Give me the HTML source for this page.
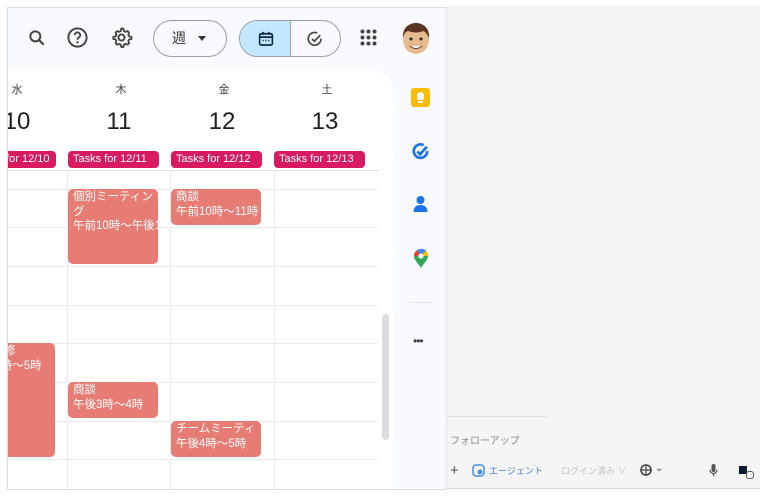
<!DOCTYPE html>
<html><head><meta charset="utf-8"><style>
*{box-sizing:border-box;margin:0;padding:0}
body{width:770px;height:497px;background:#fff;position:relative;overflow:hidden;font-family:"Liberation Sans","Noto Sans CJK JP",sans-serif}
.abs{position:absolute}
#left{left:7px;top:7px;width:440px;height:483px;background:#f8fafd;border:1px solid #dadce0;border-right:1px solid #e3e3e3;overflow:hidden}
#grid{left:0;top:62px;width:385px;height:430px;background:#fff;border-top-right-radius:22px;overflow:hidden}
.vl{position:absolute;top:100px;width:1px;height:330px;background:#e8ebf0}
.hl{position:absolute;left:0;width:370px;height:1px;background:#e8ebf0}
.ev{position:absolute;background:#e67c73;color:#fff;border-radius:5px;font-size:11.5px;line-height:14.5px;padding:1px 5px;overflow:hidden;white-space:nowrap}
.chip{position:absolute;top:81px;height:17px;background:#d81b60;color:#fff;border-radius:4px;font-size:11px;line-height:17px;padding-left:5px;overflow:hidden;white-space:nowrap}
.dow{position:absolute;top:11px;font-size:11px;color:#3c4043;width:30px;text-align:center}
.num{position:absolute;top:38px;font-size:24px;color:#1f1f1f;width:50px;text-align:center}
#right{left:447px;top:6px;width:313px;height:483px;background:#f5f5f5}
</style></head><body>
<div id="left" class="abs">
 <svg class="abs" style="left:19px;top:20px" width="20" height="20" viewBox="0 0 24 24"><circle cx="10" cy="10" r="6" fill="none" stroke="#444" stroke-width="2.4"/><path d="M14.5 14.5L20 20" stroke="#444" stroke-width="2.6"/></svg>
 <svg class="abs" style="left:58px;top:18px" width="23" height="23" viewBox="0 0 24 24"><circle cx="12" cy="12" r="9.5" fill="none" stroke="#444" stroke-width="2"/><path d="M9.2 9.5a2.8 2.8 0 1 1 4 2.5c-1 .5-1.2 1.2-1.2 2.2" fill="none" stroke="#444" stroke-width="2"/><circle cx="12" cy="17" r="1.2" fill="#444"/></svg>
 <svg class="abs" style="left:102px;top:18px" width="23" height="23" viewBox="0 0 24 24"><path d="M12 2.5l2 .3.5 2.4 1.6.9 2.3-.8 1.5 1.6-.8 2.3.9 1.6 2.4.5v2.2l-2.4.5-.9 1.6.8 2.3-1.5 1.6-2.3-.8-1.6.9-.5 2.4h-2.2l-.5-2.4-1.6-.9-2.3.8-1.5-1.6.8-2.3-.9-1.6-2.4-.5v-2.2l2.4-.5.9-1.6-.8-2.3 1.5-1.6 2.3.8 1.6-.9.5-2.4z" fill="none" stroke="#444" stroke-width="1.9" stroke-linejoin="round"/><circle cx="12" cy="12" r="3.2" fill="none" stroke="#444" stroke-width="2"/></svg>
 <div class="abs" style="left:145px;top:12px;width:74px;height:37px;border:1px solid #9aa0a6;border-radius:19px;font-size:14px;color:#333;line-height:35px;padding-left:18px">週<span style="position:absolute;left:44px;top:15px;border:4px solid transparent;border-top:5px solid #333"></span></div>
 <div class="abs" style="left:231px;top:12px;width:102px;height:37px;border:1px solid #9aa0a6;border-radius:19px;overflow:hidden">
  <div class="abs" style="left:0;top:0;width:51px;height:37px;background:#c2e7ff;border-right:1px solid #9aa0a6"></div>
  <svg class="abs" style="left:17px;top:9px" width="18" height="18" viewBox="0 0 24 24"><rect x="3.5" y="5" width="17" height="15" rx="2" fill="none" stroke="#0b2a4a" stroke-width="2.2"/><path d="M3.5 9.5h17M8 2.5v4M16 2.5v4" stroke="#0b2a4a" stroke-width="2.2"/><path d="M7.5 14h1.5M11.3 14h1.5M15 14h1.5" stroke="#0b2a4a" stroke-width="2"/></svg>
  <svg class="abs" style="left:66px;top:9px" width="18" height="18" viewBox="0 0 24 24"><path d="M20 11.5A8.5 8.5 0 1 1 15 4" fill="none" stroke="#444" stroke-width="2.2"/><path d="M8 12l3 3 8-8" fill="none" stroke="#444" stroke-width="2.2"/></svg>
 </div>
 <svg class="abs" style="left:352px;top:21px" width="17" height="17" viewBox="0 0 17 17" fill="#444"><circle cx="2.5" cy="2.5" r="2"/><circle cx="8.5" cy="2.5" r="2"/><circle cx="14.5" cy="2.5" r="2"/><circle cx="2.5" cy="8.5" r="2"/><circle cx="8.5" cy="8.5" r="2"/><circle cx="14.5" cy="8.5" r="2"/><circle cx="2.5" cy="14.5" r="2"/><circle cx="8.5" cy="14.5" r="2"/><circle cx="14.5" cy="14.5" r="2"/></svg>
 <svg class="abs" style="left:393px;top:14px" width="30" height="33" viewBox="0 0 30 33"><ellipse cx="15" cy="18" rx="13" ry="14" fill="#e7b98f"/><path d="M2 16C1 6 8 1 15 1s14 5 13 15c-2-4-3-6-6-7-4 2-10 2-15 0-3 1-4 3-5 7z" fill="#5a3420"/><circle cx="10" cy="17" r="1.5" fill="#222"/><circle cx="20" cy="17" r="1.5" fill="#222"/><path d="M9 24q6 5 12 0" fill="#fff" stroke="#7a3a2a" stroke-width="1"/></svg>

 <div id="grid" class="abs">
  <div class="dow" style="left:-6px">水</div><div class="dow" style="left:98px">木</div><div class="dow" style="left:201px">金</div><div class="dow" style="left:304px">土</div>
  <div class="num" style="left:-16px">10</div><div class="num" style="left:86px">11</div><div class="num" style="left:189px">12</div><div class="num" style="left:292px">13</div>
  <div class="chip" style="left:-8px;width:56px;padding-left:0">&nbsp;&nbsp;for 12/10</div>
  <div class="chip" style="left:60px;width:91px">Tasks for 12/11</div>
  <div class="chip" style="left:163px;width:91px">Tasks for 12/12</div>
  <div class="chip" style="left:266px;width:91px">Tasks for 12/13</div>
  <div class="hl" style="top:100px;background:#dadce0"></div>
  <div class="hl" style="top:119px"></div><div class="hl" style="top:157px"></div><div class="hl" style="top:196px"></div><div class="hl" style="top:235px"></div><div class="hl" style="top:273px"></div><div class="hl" style="top:312px"></div><div class="hl" style="top:351px"></div><div class="hl" style="top:389px"></div>
  <div class="vl" style="left:59px"></div><div class="vl" style="left:162px"></div><div class="vl" style="left:266px"></div>
  <div class="ev" style="left:60px;top:119px;width:90px;height:75px">個別ミーティン<br>グ<br>午前10時〜午後1</div>
  <div class="ev" style="left:163px;top:119px;width:90px;height:36px">商談<br>午前10時〜11時</div>
  <div class="ev" style="left:-20px;top:273px;width:67px;height:114px;padding-left:0">&nbsp;&nbsp;&nbsp;&nbsp;&nbsp;修<br>&nbsp;&nbsp;&nbsp;&nbsp;時〜5時</div>
  <div class="ev" style="left:60px;top:312px;width:90px;height:36px">商談<br>午後3時〜4時</div>
  <div class="ev" style="left:163px;top:351px;width:90px;height:36px">チームミーティ<br>午後4時〜5時</div>
  <div class="abs" style="left:374px;top:244px;width:7px;height:126px;background:#dadce0;border-radius:4px"></div>
 </div>
 <div class="abs" style="left:403px;top:80px;width:19px;height:19px;background:#fbbc04;border-radius:3px"><div class="abs" style="left:6px;top:4px;width:7px;height:8px;background:#fff;border-radius:4px 4px 2px 2px"></div><div class="abs" style="left:7px;top:13px;width:5px;height:2px;background:#fff"></div></div>
 <svg class="abs" style="left:403px;top:134px" width="19" height="19" viewBox="0 0 24 24"><path d="M20.5 11.5A8.5 8.5 0 1 1 16 4" fill="none" stroke="#1a73e8" stroke-width="3.4"/><path d="M8 12l3.5 3.5L20 6" fill="none" stroke="#1a73e8" stroke-width="3.4"/></svg>
 <svg class="abs" style="left:404px;top:187px" width="17" height="18" viewBox="0 0 17 18"><circle cx="8.5" cy="5" r="4" fill="#1a73e8"/><path d="M1.5 17c0-5 3-7 7-7s7 2 7 7z" fill="#1a73e8"/></svg>
 <svg class="abs" style="left:405px;top:240px" width="16" height="21" viewBox="0 0 16 21"><path d="M8 20C5 15 1 12 1 8a7 7 0 0 1 14 0c0 4-4 7-7 12z" fill="#34a853"/><path d="M1 8a7 7 0 0 1 3-5.7L8 8z" fill="#ea4335"/><path d="M4 2.3A7 7 0 0 1 13 2.5L8 8z" fill="#4285f4"/><path d="M13 2.5A7 7 0 0 1 15 8H8z" fill="#fbbc04"/><circle cx="8" cy="8" r="2.6" fill="#fff"/></svg>
 <div class="abs" style="left:402px;top:294px;width:21px;height:1px;background:#e3e3e3"></div>
 <div class="abs" style="left:405px;top:328px;font-size:12px;color:#444;letter-spacing:-1px;line-height:10px">•••</div>
</div>
<div id="right" class="abs">
 <div class="abs" style="left:0;top:410px;width:100px;height:1px;background:#e0e0e0"></div>
 <div class="abs" style="left:3px;top:426px;font-size:10px;color:#888">フォローアップ</div>
 <div class="abs" style="left:3px;top:456px;font-size:15px;color:#555">+</div>
 <svg class="abs" style="left:25px;top:458px" width="13" height="13" viewBox="0 0 13 13"><rect x="1" y="1" width="11" height="11" rx="3" fill="none" stroke="#4a90e2" stroke-width="1.5"/><circle cx="8" cy="8" r="2.5" fill="#4a90e2"/></svg>
 <div class="abs" style="left:42px;top:458px;font-size:9px;color:#4a7fd0">エージェント</div>
 <div class="abs" style="left:114px;top:458px;font-size:9px;color:#c0c0c0">ログイン済み ∨</div>
 <svg class="abs" style="left:193px;top:458px" width="12" height="12" viewBox="0 0 12 12"><circle cx="6" cy="6" r="5" fill="none" stroke="#444" stroke-width="1.6"/><path d="M1 6h10M6 1v10" stroke="#444" stroke-width="1.2"/></svg>
 <div class="abs" style="left:208px;top:457px;font-size:10px;color:#444">⌄</div>
 <svg class="abs" style="left:262px;top:457px" width="9" height="14" viewBox="0 0 9 14"><rect x="2.5" y="1" width="4" height="8" rx="2" fill="#555"/><path d="M1 7a3.5 3.5 0 0 0 7 0M4.5 10.5V13" stroke="#555" stroke-width="1.2" fill="none"/></svg>
 <div class="abs" style="left:292px;top:460px;width:8px;height:8px;background:#0b1a33"></div>
 <div class="abs" style="left:299px;top:465px;width:8px;height:8px;border:1px solid #555;border-radius:3px;background:#fff"></div>
 <div class="abs" style="left:0;top:482px;width:313px;height:1px;background:#d5d5d5"></div>
</div>
</body></html>
